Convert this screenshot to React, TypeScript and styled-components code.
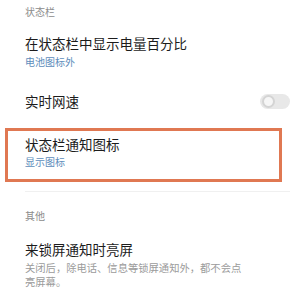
import React from 'react';
import styled, { createGlobalStyle } from 'styled-components';

const GlobalStyle = createGlobalStyle`
  html, body {
    margin: 0;
    padding: 0;
    background: #fff;
  }
  body {
    font-family: 'Noto Sans CJK SC', 'Noto Sans', sans-serif;
  }
`;

const App: React.FC = () => {
  return (
    <Page>
      <GlobalStyle />
      <SectionHeader>状态栏</SectionHeader>

      <Item>
        <ItemText>
          <Title>在状态栏中显示电量百分比</Title>
          <Sub>电池图标外</Sub>
        </ItemText>
      </Item>

      <SwitchItem>
        <Title>实时网速</Title>
        <Toggle />
      </SwitchItem>

      <HighlightItem>
        <Title>状态栏通知图标</Title>
        <Sub $tight>显示图标</Sub>
      </HighlightItem>

      <Divider />

      <SectionHeader $gap>其他</SectionHeader>

      <Item $last>
        <ItemText>
          <Title>来锁屏通知时亮屏</Title>
          <Desc>关闭后，除电话、信息等锁屏通知外，都不会点亮屏幕。</Desc>
        </ItemText>
      </Item>
    </Page>
  );
};

const Page = styled.div`
  width: 300px;
  height: 290px;
  overflow: hidden;
  padding-top: 5px;
  box-sizing: border-box;
  background: #fff;
`;

const SectionHeader = styled.div<{ $gap?: boolean }>`
  padding-left: 25px;
  margin-top: ${p => (p.$gap ? '17px' : '0')};
  font-size: 10px;
  line-height: 14px;
  color: #8c8c8c;
`;

const Item = styled.div<{ $last?: boolean }>`
  display: flex;
  align-items: center;
  padding: 15px 25px 0;
  margin-top: ${p => (p.$last ? '2px' : '0')};
`;

const ItemText = styled.div`
  display: flex;
  flex-direction: column;
  gap: 3px;
`;

const Title = styled.div`
  font-size: 13.5px;
  line-height: 18px;
  color: #1c1c1c;
`;

const Sub = styled.div<{ $tight?: boolean }>`
  font-size: 10px;
  line-height: 14px;
  color: #5d8dbb;
  margin-top: ${p => (p.$tight ? '2px' : '0')};
`;

const Desc = styled.div`
  max-width: 222px;
  font-size: 10.3px;
  line-height: 14px;
  color: #9b9b9b;
`;

const SwitchItem = styled.div`
  display: flex;
  align-items: center;
  justify-content: space-between;
  padding: 23px 10px 0 25px;
`;

const Toggle = styled.span`
  position: relative;
  display: block;
  width: 30px;
  height: 15px;
  border-radius: 8px;
  background: #e8e8e8;
  &::after {
    content: '';
    position: absolute;
    left: 2px;
    top: 1px;
    width: 9px;
    height: 9px;
    border-radius: 50%;
    border: 2px solid #d4d4d4;
    background: #f6f6f6;
  }
`;

const HighlightItem = styled.div`
  display: flex;
  flex-direction: column;
  margin: 18px 18px 0 5px;
  padding: 4px 14px 10px 17px;
  border: 3px solid #e07852;
`;

const Divider = styled.div`
  height: 1px;
  margin: 9px 10px 0 25px;
  background: #f0f0f0;
`;

export default App;
